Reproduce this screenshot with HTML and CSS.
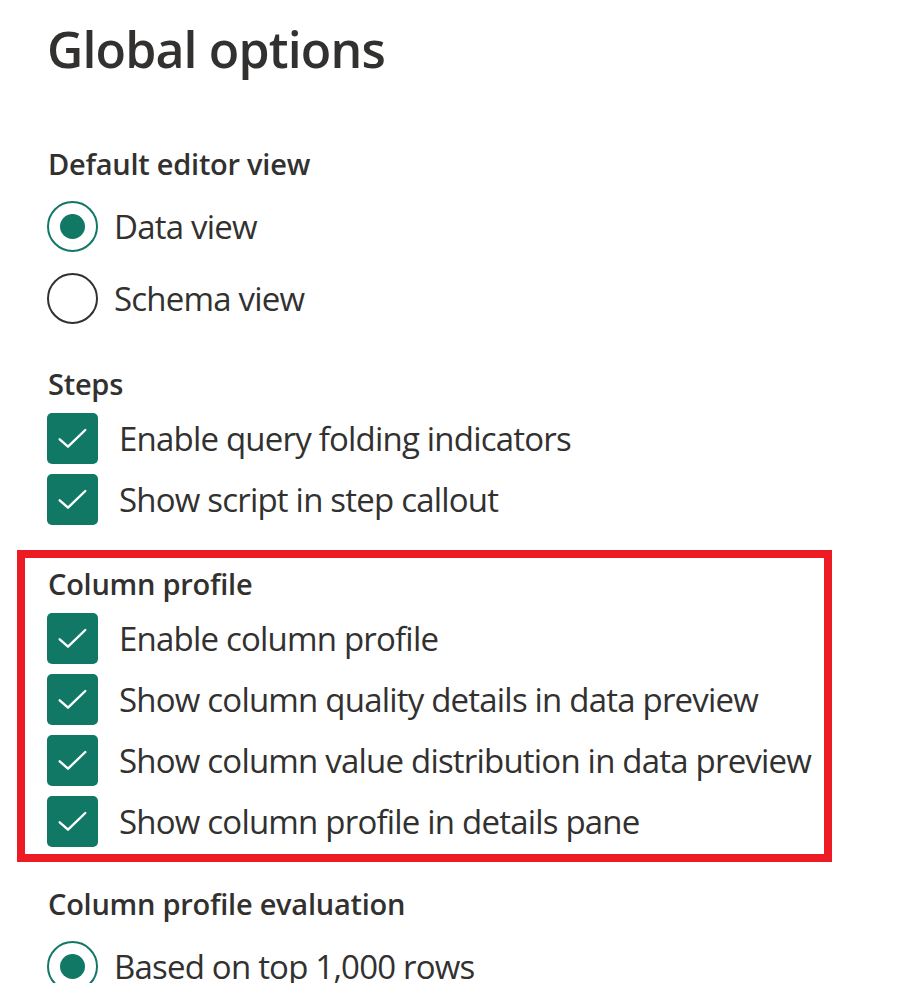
FILE: index.html
```html
<!DOCTYPE html>
<html lang="en">
<head>
<meta charset="utf-8">
<title>Global options</title>
<link rel="stylesheet" href="styles.css">
</head>
<body>
<main class="page">
  <h1 class="title">Global options</h1>

  <section class="group group-radio">
    <h2 class="group-label">Default editor view</h2>
    <div class="options">
      <label class="option">
        <span class="radio checked"><span class="dot"></span></span>
        <span class="option-text">Data view</span>
      </label>
      <label class="option">
        <span class="radio"></span>
        <span class="option-text">Schema view</span>
      </label>
    </div>
  </section>

  <section class="group group-check steps">
    <h2 class="group-label">Steps</h2>
    <div class="options">
      <label class="option">
        <span class="checkbox"><svg viewBox="0 0 51 51" width="51" height="51"><path d="M12.7 26.3 L21 33.7 L38.3 17" /></svg></span>
        <span class="option-text check-text">Enable query folding indicators</span>
      </label>
      <label class="option">
        <span class="checkbox"><svg viewBox="0 0 51 51" width="51" height="51"><path d="M12.7 26.3 L21 33.7 L38.3 17" /></svg></span>
        <span class="option-text check-text">Show script in step callout</span>
      </label>
    </div>
  </section>

  <section class="group group-check highlight">
    <h2 class="group-label">Column profile</h2>
    <div class="options">
      <label class="option">
        <span class="checkbox"><svg viewBox="0 0 51 51" width="51" height="51"><path d="M12.7 26.3 L21 33.7 L38.3 17" /></svg></span>
        <span class="option-text check-text">Enable column profile</span>
      </label>
      <label class="option">
        <span class="checkbox"><svg viewBox="0 0 51 51" width="51" height="51"><path d="M12.7 26.3 L21 33.7 L38.3 17" /></svg></span>
        <span class="option-text check-text">Show column quality details in data preview</span>
      </label>
      <label class="option">
        <span class="checkbox"><svg viewBox="0 0 51 51" width="51" height="51"><path d="M12.7 26.3 L21 33.7 L38.3 17" /></svg></span>
        <span class="option-text check-text">Show column value distribution in data preview</span>
      </label>
      <label class="option">
        <span class="checkbox"><svg viewBox="0 0 51 51" width="51" height="51"><path d="M12.7 26.3 L21 33.7 L38.3 17" /></svg></span>
        <span class="option-text check-text">Show column profile in details pane</span>
      </label>
    </div>
  </section>

  <section class="group group-radio evaluation">
    <h2 class="group-label">Column profile evaluation</h2>
    <div class="options">
      <label class="option">
        <span class="radio checked"><span class="dot"></span></span>
        <span class="option-text">Based on top 1,000 rows</span>
      </label>
    </div>
  </section>
</main>
</body>
</html>
```
FILE: styles.css
```css
html, body {
  margin: 0;
  padding: 0;
  background: #ffffff;
}

body {
  font-family: "Open Sans", "Noto Sans", "Liberation Sans", sans-serif;
  color: #323130;
  overflow: hidden;
}

.page {
  padding: 15px 0 0 47px;
  display: flex;
  flex-direction: column;
}

.title {
  margin: 0;
  font-size: 50px;
  line-height: 68px;
  font-weight: 600;
  letter-spacing: -0.85px;
}

.group {
  display: flex;
  flex-direction: column;
}

.group-label {
  margin: 0;
  font-size: 29px;
  line-height: 40px;
  font-weight: 600;
  letter-spacing: -0.25px;
  padding-left: 1px;
}

.options {
  display: flex;
  flex-direction: column;
}

.group-radio .options {
  margin-top: 17px;
  gap: 21px;
}

.group-check .options {
  margin-top: 9px;
  gap: 10px;
}

.group-radio:first-of-type {
  margin-top: 61px;
}

.steps {
  margin-top: 40px;
}

.highlight {
  margin-top: 25px;
  margin-left: -30px;
  width: 815px;
  box-sizing: border-box;
  border: 8px solid #ed1c24;
  padding: 6px 0 7px 22px;
}

.evaluation {
  margin-top: 22px;
}

.option {
  display: flex;
  align-items: center;
  height: 51px;
}

.option-text {
  font-size: 33px;
  line-height: 45px;
  letter-spacing: -0.8px;
  white-space: nowrap;
}

.radio {
  flex: none;
  width: 51px;
  height: 51px;
  box-sizing: border-box;
  border: 2px solid #323130;
  border-radius: 50%;
  display: flex;
  align-items: center;
  justify-content: center;
  margin-right: 16px;
}

.radio.checked {
  border-color: #117865;
}

.dot {
  width: 25px;
  height: 25px;
  border-radius: 50%;
  background: #117865;
}

.checkbox {
  flex: none;
  width: 51px;
  height: 51px;
  border-radius: 5px;
  background: #117865;
  margin-right: 21px;
  display: block;
}

.checkbox svg {
  display: block;
}

.checkbox path {
  fill: none;
  stroke: #ffffff;
  stroke-width: 2.4;
  stroke-linecap: round;
  stroke-linejoin: round;
}
```
